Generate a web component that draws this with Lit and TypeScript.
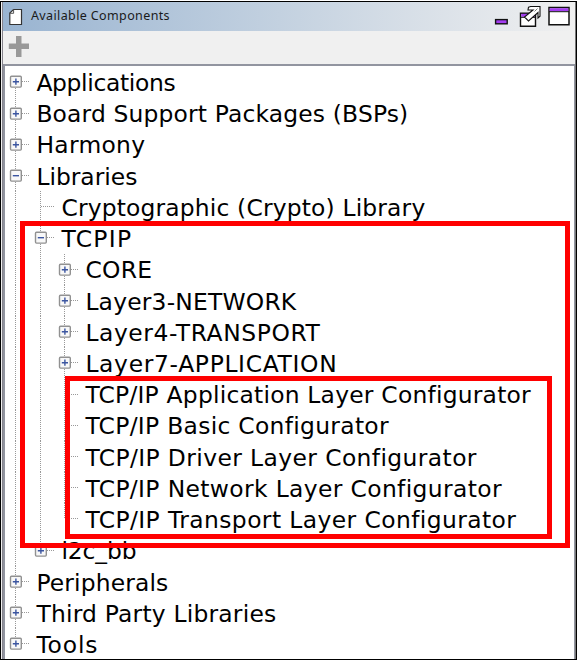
import { LitElement, html, svg, css } from "lit";
import { customElement } from "lit/decorators.js";

type Kind = "plus" | "minus" | "leaf";
interface Row { label: string; depth: number; kind: Kind; width: number; rails: string[]; }

const r = (label: string, depth: number, kind: Kind, width: number, ...rails: string[]): Row =>
  ({ label, depth, kind, width, rails });

// Each rail is the dotted guide of one depth: full, top (ends at the row), bottom (starts at the row) or child.
const ROWS: Row[] = [
  r("Applications", 0, "plus", 139, "bottom"),
  r("Board Support Packages (BSPs)", 0, "plus", 372, "full"),
  r("Harmony", 0, "plus", 109, "full"),
  r("Libraries", 0, "minus", 101, "full", "child"),
  r("Cryptographic (Crypto) Library", 1, "leaf", 364, "full", "full"),
  r("TCPIP", 1, "minus", 71, "full", "full", "child"),
  r("CORE", 2, "plus", 67, "full", "full", "full"),
  r("Layer3-NETWORK", 2, "plus", 211, "full", "full", "full"),
  r("Layer4-TRANSPORT", 2, "plus", 235, "full", "full", "full"),
  r("Layer7-APPLICATION", 2, "plus", 252, "full", "full", "full"),
  r("TCP/IP Application Layer Configurator", 2, "leaf", 445.500, "full", "full", "full"),
  r("TCP/IP Basic Configurator", 2, "leaf", 303.5, "full", "full", "full"),
  r("TCP/IP Driver Layer Configurator", 2, "leaf", 391.5, "full", "full", "full"),
  r("TCP/IP Network Layer Configurator", 2, "leaf", 416.5, "full", "full", "full"),
  r("TCP/IP Transport Layer Configurator", 2, "leaf", 431, "full", "full", "top"),
  r("i2c_bb", 1, "plus", 75, "full", "top"),
  r("Peripherals", 0, "plus", 132, "full"),
  r("Third Party Libraries", 0, "plus", 240, "full"),
  r("Tools", 0, "plus", 62, "top"),
];

const STEP = 24.7;
const guide = (row: Row) => {
  const cx = 10.5 + Math.round(row.depth * STEP);
  const width = Math.round(31 + row.depth * STEP);
  const span: Record<string, [number, number]> = { full: [0, 32], top: [0, 16], bottom: [16, 32], child: [24, 32] };
  return html`<svg class="guide" width=${width} height="32" viewBox="0 0 ${width} 32">
    ${row.rails.map((k, i) => {
      const x = 10.5 + Math.round(i * STEP);
      return svg`<line class="dots" x1=${x + 0.4} x2=${x + 0.4} y1=${span[k][0]} y2=${span[k][1]} />`;
    })}
    <path class="dots" d=${`M${cx + 0.5} 15.5h14`} />
    ${row.kind === "leaf" ? "" : svg`
      <rect class="box" x=${cx - 5} y="10.3" width="10.8" height="10.8" rx="1" />
      <path class="sign" d=${`M${cx - 2.7} 15.7h6.2` + (row.kind === "plus" ? `M${cx + 0.4} 12.6v6.2` : "")} />`}
  </svg>`;
};

@customElement("app-root")
export class AppRoot extends LitElement {
  static styles = css`
    :host { display: block; position: relative; width: 577px; height: 662px; overflow: hidden; background: #fff; font-family: Verdana, "DejaVu Sans", sans-serif; }
    .window { box-sizing: border-box; width: 577px; height: 659px; border: 1px solid #000; border-top-width: 1px; margin-top: 1px; display: flex; flex-direction: column; background: #f0f0f0; }
    .frame { flex: 1; min-height: 0; display: flex; flex-direction: column; margin-left: 1px; border-left: 1px solid #85838c; border-right: 1px solid #777; }
    .title { flex: none; height: 29px; display: flex; align-items: center; background: linear-gradient(90deg, #99b4d1, #f0f0f0); padding-left: 6px; padding-right: 3px; }
    .title .name { font-family: Tahoma, "Noto Sans", sans-serif; font-size: 12.5px; line-height: 18px; color: #1a1a1a; margin-left: 8px; margin-top: -1px; flex: 1; white-space: nowrap; }
    .name span { display: inline-block; white-space: pre; }
    .tools { flex: none; height: 33px; padding-left: 5px; }
    .tools svg { display: block; margin-top: 5px; }
    .tree { flex: 1; border: 2px solid #9295a0; border-width: 2px 1px 0 2px; background: #fff; overflow: hidden; }
    .row { height: 31.22px; display: flex; }
    .guide { flex: none; display: block; overflow: hidden; margin-top: 0.4px; }
    .label { font-size: 23.4px; line-height: 35px; color: #000; white-space: pre; margin-left: 0.4px; }
    .dots { stroke: #999; stroke-width: 1; stroke-dasharray: 1 1; fill: none; shape-rendering: crispEdges; }
    .box { fill: #f8f8f8; stroke: #919191; stroke-width: 1.4; }
    .sign { stroke: #3b55a0; stroke-width: 1.4; fill: none; }
    .mark { position: absolute; box-sizing: border-box; border: 5px solid #f00; }
    .outer { left: 20px; top: 221px; width: 550px; height: 327px; }
    .inner { left: 65px; top: 376px; width: 487px; height: 163px; }
  `;

  firstUpdated() {
    this.renderRoot.querySelectorAll<HTMLElement>("[data-width]").forEach((el) => {
      const natural = el.getBoundingClientRect().width;
      const gap = (Number(el.dataset.width) - natural) / (el.textContent ?? "").length;
      el.style.letterSpacing = `${gap}px`;
    });
  }

  render() {
    return html`
      <div class="window"><div class="frame">
        <div class="title">
          <svg width="14" height="18" viewBox="0 0 14 18"><path d="M4.5 1.5H12.5V16.5H.8V5z" fill="#fff" stroke="#333" stroke-width="1.2"/><path d="M1 5.3H4.6V1.5" fill="none" stroke="#555"/></svg>
          <div class="name"><span data-width="139">Available Components</span></div>
          <svg width="78" height="28" viewBox="0 0 78 28">
            <rect x="1.6" y="16.6" width="11.6" height="4.2" fill="#a33df0" stroke="#111" stroke-width="1.4"/>
            <path d="M26.500 10.2h15v13h-15z" fill="#fff" stroke="#111" stroke-width="1.4"/>
            <path d="M27.2 10.8h13.6v3H27.2z" fill="#a33df0"/><path d="M26.5 14.3h15" stroke="#111"/>
            <path d="M34.5 4.2L36.5 3.5H46V13.2L44 15V9.5L34.5 18L30.5 14L39 7H34z" fill="#fff" stroke="#111" stroke-width="1.1"/>
            <path d="M43.5 5.5l-3 3M34.5 18l-2-1.5" stroke="#555" stroke-width=".8"/>
            <path d="M55 4.5h20v17.2H55z" fill="#fff" stroke="#111" stroke-width="1.5"/>
            <path d="M55.7 5.2h18.6v3H55.7z" fill="#a33df0"/><path d="M55 8.7h20" stroke="#111"/>
          </svg>
        </div>
        <div class="tools"><svg width="22" height="22" viewBox="0 0 22 22"><path d="M8 0h5.5v7.5H21v5.5h-7.500V21H8V13H.8V7.500H8z" fill="#999"/></svg></div>
        <div class="tree">${ROWS.map((row) => html`
          <div class="row">${guide(row)}<span class="label" data-width=${row.width}>${row.label}</span></div>`)}
        </div>
      </div></div>
      <div class="mark outer"></div>
      <div class="mark inner"></div>`;
  }
}
